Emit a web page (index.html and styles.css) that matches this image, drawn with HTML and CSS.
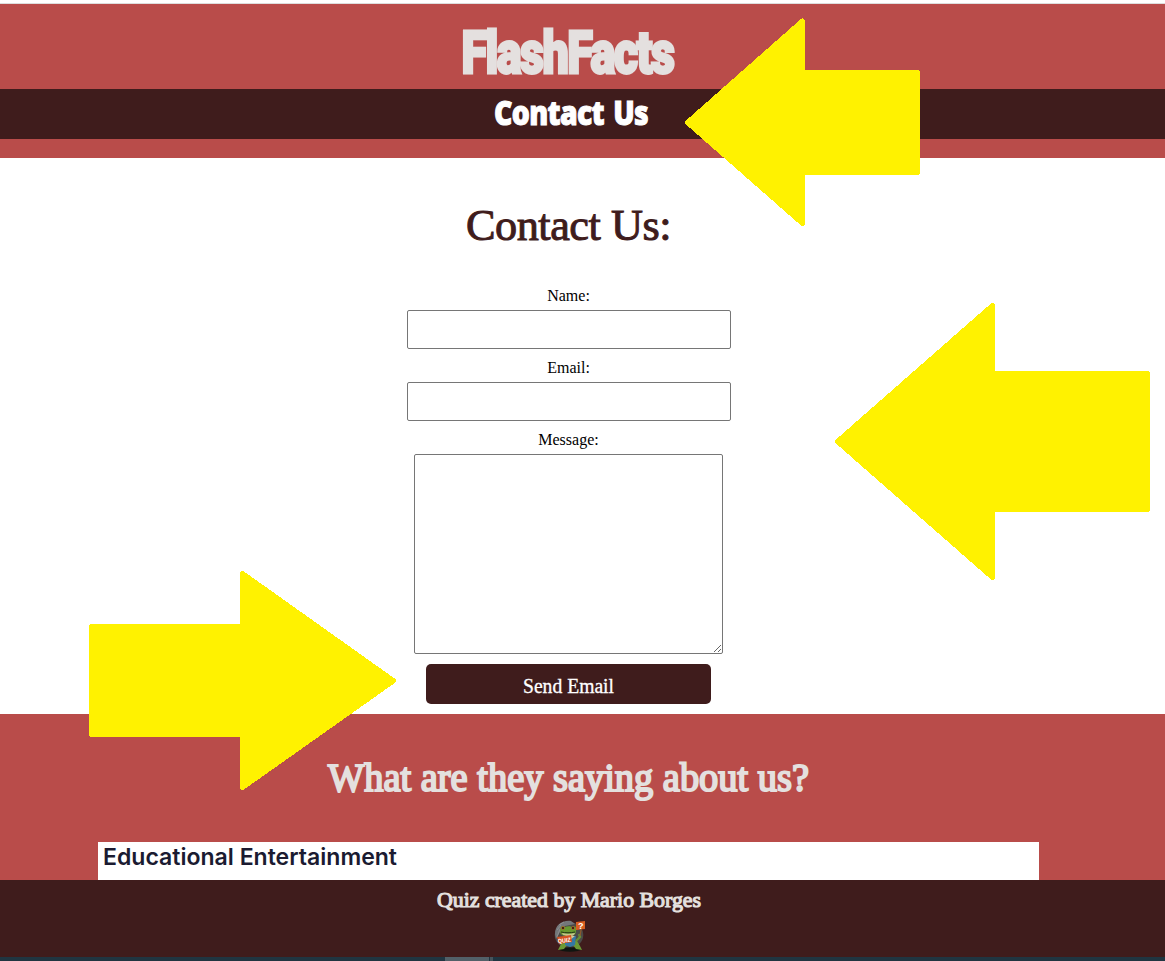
FILE: index.html
```html
<!DOCTYPE html>
<html lang="en">
<head>
<meta charset="utf-8">
<title>FlashFacts - Contact Us</title>
<link rel="stylesheet" href="styles.css">
</head>
<body>
<div class="page">
  <header class="header">
    <h1 class="brand"><svg class="line" width="220" height="85"><text class="brand-text" x="2.5" y="69" textLength="212" lengthAdjust="spacingAndGlyphs">FlashFacts</text></svg></h1>
    <nav class="nav"><a class="nav-link"><svg class="line" width="160" height="50"><text class="nav-text" x="4" y="36" textLength="154" lengthAdjust="spacingAndGlyphs">Contact Us</text></svg></a></nav>
  </header>
  <main class="contact">
    <h2 class="contact-title"><svg class="line" width="210" height="60"><text class="contact-text" x="2" y="41.5" textLength="205" lengthAdjust="spacingAndGlyphs">Contact Us:</text></svg></h2>
    <form class="form">
      <label class="label" for="name">Name:</label>
      <input class="field" id="name" type="text">
      <label class="label" for="email">Email:</label>
      <input class="field" id="email" type="text">
      <label class="label" for="message">Message:</label>
      <textarea class="message" id="message"></textarea>
      <button class="send" type="button"><svg class="line" width="96" height="40"><text class="send-text" x="2" y="29" textLength="91" lengthAdjust="spacingAndGlyphs">Send Email</text></svg></button>
    </form>
  </main>
  <section class="reviews">
    <h2 class="reviews-title"><svg class="line" width="490" height="60"><text class="reviews-text" x="4" y="46.5" textLength="481" lengthAdjust="spacingAndGlyphs">What are they saying about us?</text></svg></h2>
    <article class="review"><svg class="line" width="310" height="38"><text class="review-text" x="5" y="23" textLength="294" lengthAdjust="spacingAndGlyphs">Educational Entertainment</text></svg></article>
  </section>
  <footer class="footer">
    <svg class="line" width="270" height="39"><text class="footer-text" x="3" y="27" textLength="264" lengthAdjust="spacingAndGlyphs">Quiz created by Mario Borges</text></svg>
    <svg class="frog" width="32" height="34" viewBox="-1 0 32 34">
      <ellipse cx="15" cy="16" rx="14.3" ry="13" fill="#4b4a48"/>
      <path d="M1 15C1 6 8 1 17 2l4 3-10 2-5 6-4 7z" fill="#74777a"/>
      <path d="M5 6l5-3M3 11l4-5M3 18l3-8" stroke="#929497" stroke-width=".8"/>
      <ellipse cx="16" cy="30.5" rx="11" ry="2.2" fill="#101511"/>
      <path d="M9 22l-3 5-2 4 6-1 3-4h6l3 4 6 1-2-4-3-5z" fill="#6b9a35"/>
      <path d="M11 17h11l-1 9-5 2-5-2z" fill="#3478a5"/>
      <path d="M12 17l4 4 5-4z" fill="#cfc99c"/>
      <path d="M6 12c0-5 3-6 5-4 2-1 6-1 7 0 3-2 5 0 4 4 0 4-3 5-8 5s-8-1-8-5z" fill="#66992f"/>
      <path d="M8 14c4 1 9 1 13 0-1 3-3 3-6 3s-6 0-7-3z" fill="#c5c58c"/>
      <circle cx="9" cy="9" r="1.8" fill="#b85524"/><circle cx="19" cy="9" r="1.8" fill="#b85524"/>
      <circle cx="9" cy="9" r="1" fill="#181611"/><circle cx="19" cy="9" r="1" fill="#181611"/>
      <path d="M7 13c4 1 10 1 14 0" stroke="#263916" fill="none"/>
      <path d="M22 22l4-4-1-3" fill="none" stroke="#668d36" stroke-width="2.4"/>
      <path d="M26 17l1-6" stroke="#8c592c" stroke-width="1.3"/>
      <path d="M22 3l9-1v8l-9 1z" fill="#d95e20"/>
      <text class="sign-mark" x="24" y="10">?</text>
      <path d="M3 18l14-2 1 7-13 2z" fill="#d65322"/>
      <text class="sign-word" x="4" y="24.3" transform="rotate(-7 4 24)" textLength="13" lengthAdjust="spacingAndGlyphs">QUIZ</text>
    </svg>
  </footer>
  <div class="taskbar"><span class="task"></span><span class="task-edge"></span></div>
  <svg class="arrows" width="1165" height="961" viewBox="0 0 1165 961" aria-hidden="true">
    <path d="M687.5 122.5L802.5 21V72.5H917.5V172.5H802.5V223.5z"/>
    <path d="M837.5 441.5L992.5 305.5V373.5H1147.5V509.5H992.5V577.5z"/>
    <path d="M91.5 626.5H242.5V573.5L393.5 680.8L242.5 787.5V734.5H91.5z"/>
  </svg>
</div>
</body>
</html>
```
FILE: styles.css
```css
* { box-sizing: border-box; }
body { margin: 0; background: #fff; font-family: "Liberation Serif", serif; overflow: hidden; }
h1, h2 { margin: 0; }
.page { position: relative; height: 961px; overflow: hidden; }
.line { display: block; overflow: visible; }

.header { height: 158px; margin: 0; border-top: 3px solid #fff; background: #b94c4a; box-shadow: inset 0 1px #ddd; }
.brand { display: flex; justify-content: center; height: 86px; padding: 1px 28px 0 0; }
.brand-text { font: 900 60px Roboto, sans-serif; letter-spacing: -2px; fill: #e4e0df; stroke: #e4e0df; stroke-width: 2.8px; }
.nav { display: flex; justify-content: center; height: 50px; padding-right: 25px; background: #3f1c1c; }
.nav-text { font: 800 34px "Open Sans", sans-serif; letter-spacing: -.8px; word-spacing: 3px; fill: #fff; stroke: #fff; stroke-width: 1px; }

.contact { height: 556px; padding: 40px 28px 0 0; }
.contact-title { display: flex; justify-content: center; height: 88px; }
.contact-text { font: 400 45px "Liberation Serif", serif; letter-spacing: -.5px; fill: #3f1c1c; stroke: #3f1c1c; stroke-width: 1px; }
.form { display: flex; flex-direction: column; align-items: center; }
.label { height: 24px; font-size: 16px; line-height: 20px; }
.field { width: 324px; height: 39px; margin: 0 0 9px; border: 1px solid #767676; border-radius: 2px; }
.message { width: 309px; height: 200px; margin: 0 0 10px; border: 1px solid #767676; border-radius: 2px; resize: both; }
.send { display: flex; justify-content: center; width: 285px; height: 40px; padding: 0; border: 0; border-radius: 5px; background: #3f1c1c; }
.send-text { font: 20px "Liberation Serif", serif; fill: #fff; stroke: #fff; stroke-width: .3px; }

.reviews { height: 166px; padding: 30px 28px 0 0; background: #b94c4a; }
.reviews-title { display: flex; justify-content: center; height: 98px; }
.reviews-text { font: 400 40px "Liberation Serif", serif; fill: #e4e0df; stroke: #e4e0df; stroke-width: 2px; }
.review { width: 941px; height: 38px; margin: 0 auto; background: #fff; }
.review-text { font: 600 23px Inter, sans-serif; fill: #1b1b31; }

.footer { display: flex; flex-direction: column; align-items: center; height: 77px; padding-right: 28px; background: #3f1c1c; }
.footer-text { font: 400 21.5px "Liberation Serif", serif; fill: #e4e0df; stroke: #e4e0df; stroke-width: 1.1px; }
.frog { display: block; }
.sign-mark { font: bold 9px "Liberation Sans", sans-serif; fill: #fff; }
.sign-word { font: bold 6px "Liberation Sans", sans-serif; fill: #fff; }

.taskbar { display: flex; gap: 1px; height: 4px; padding-left: 445px; background: #203541; }
.task { width: 44px; background: #526068; }
.task-edge { width: 3px; background: #46545c; }

.arrows { position: absolute; inset: 0; pointer-events: none; }
.arrows path { fill: #fff200; stroke: #fff200; stroke-width: 5px; stroke-linejoin: round; shape-rendering: crispEdges; }
```
